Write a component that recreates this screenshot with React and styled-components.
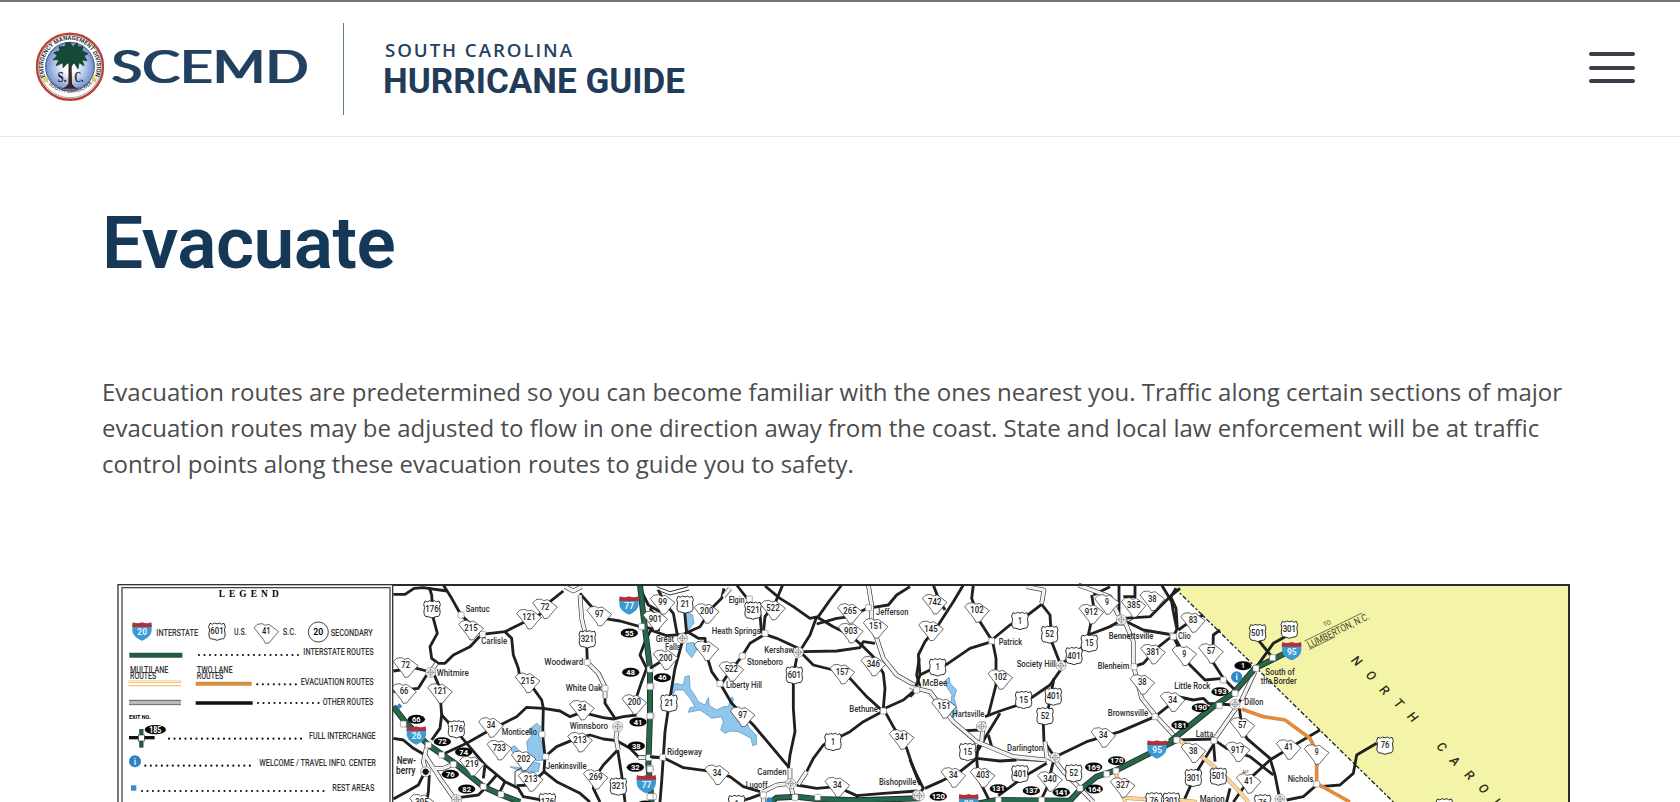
import React from 'react';
import styled, { createGlobalStyle } from 'styled-components';

const GlobalStyle = createGlobalStyle`
  * { box-sizing: border-box; }
  html, body { margin: 0; background: #fff; }
  body { font-family: "Open Sans", "Noto Sans", sans-serif; }
`;
const Page = styled.div`
  width: 100%;
  height: 802px;
  overflow: hidden;
  border-top: 2px solid #6b7680;
  background: #fff;
`;
const Header = styled.header`
  height: 135px;
  display: flex;
  align-items: center;
  justify-content: space-between;
  border-bottom: 1px solid #e7e7e9;
  padding: 0 45px 0 34px;
`;
const Brand = styled.div`
  display: flex;
  align-items: center;
`;
const LogoArt = styled.svg`
  display: block;
  width: 276px;
  height: 76px;
`;
const Divider = styled.div`
  width: 1px;
  height: 92px;
  margin-left: 33px;
  background: #55806b;
`;
const GuideName = styled.svg`
  display: block;
  width: 310px;
  height: 64px;
  margin-left: 36px;
`;
const MenuButton = styled.button`
  width: 46px;
  height: 31px;
  margin-bottom: 3px;
  padding: 0;
  border: 0;
  background: none;
  display: flex;
  flex-direction: column;
  justify-content: space-between;
`;
const MenuBar = styled.span`
  display: block;
  width: 46px;
  height: 4px;
  border-radius: 2px;
  background: #3c3c4a;
`;
const Main = styled.main`
  padding: 61px 110px 0 102px;
`;
const Title = styled.h1`
  margin: 0;
  font: 600 73px/90px Roboto, sans-serif;
  letter-spacing: -0.5px;
  color: #153857;
`;
const Copy = styled.p`
  margin: 86px 0 0;
  font-size: 24px;
  line-height: 36px;
  color: #4c4c4c;
  white-space: nowrap;
`;
const Line = styled.span`
  display: block;
`;
const MapArt = styled.svg`
  display: block;
  width: 1470px;
  height: 227px;
  margin: 93px 0 0 8px;
`;

function Seal() {
  return (
    <g transform="translate(0 -2.3)">
      <defs>
        <radialGradient id="sky">
          <stop offset="0.25" stopColor="#fff" />
          <stop offset="1" stopColor="#6f8fd0" />
        </radialGradient>
        <path id="sealTop" d="M12.2 50 A26.7 26.7 0 1 1 59.8 50" />
        <path id="sealBottom" d="M8.5 47 A30.5 30.5 0 0 0 63.5 47" />
      </defs>
      <circle cx="36" cy="38" r="33" fill="#fff" stroke="#bd4038" strokeWidth="2.4" />
      <circle cx="36" cy="38" r="31" fill="none" stroke="#555" strokeWidth=".5" />
      <circle cx="36" cy="38" r="24.4" fill="url(#sky)" stroke="#405584" strokeWidth="1" />
      <text fontFamily="Roboto" fontSize="5.8" fontWeight="700" fill="#333">
        <textPath href="#sealTop" startOffset="2" textLength="104" lengthAdjust="spacingAndGlyphs">EMERGENCY MANAGEMENT DIVISION</textPath>
      </text>
      <text fontFamily="Roboto" fontSize="5.8" fontWeight="500" fill="#555">
        <textPath href="#sealBottom" startOffset="10" textLength="49">SOUTH CAROLINA</textPath>
      </text>
      <path d="M34.6 29 L34.4 55 Q32 59 27 60 H45 Q40 59 38 55 L37.5 29Z" fill="#38261f" />
      <path d="M36 14 L39 18 L43 14 L44 18 L49 18 L48 22 L54 25 L50 27 L53 32 L48 31 L50 37 L45 34 L44 40 L40 34 L37 38 L34 34 L29 39 L29 34 L22 37 L25 31 L19 31 L23 27 L20 24 L26 22 L25 18 L31 18 L32 14Z" fill="#174a36" stroke="#123b2c" strokeWidth=".8" strokeLinejoin="round" />
      <g fontFamily="Liberation Serif" fontWeight="700" fontSize="14" fill="#222">
        <text x="23.5" y="53" textLength="9" lengthAdjust="spacingAndGlyphs">S.</text>
        <text x="40.5" y="53" textLength="9" lengthAdjust="spacingAndGlyphs">C.</text>
      </g>
      <path d="M12 47.5l1 2.3h2.4l-1.9 1.5.7 2.4-2.2-1.4-2.2 1.4.7-2.4-1.9-1.5H11zM60 47.5l1 2.3h2.4l-1.9 1.5.7 2.4-2.2-1.4-2.2 1.4.7-2.4-1.9-1.5H59z" fill="#e6d53c" stroke="#9a9036" strokeWidth=".3" />
    </g>
  );
}

/* Map drawing. Each sheet carries its own local coordinates, offset by x. */
const sheets = [
  {
    x: 840,
    water: [
      'M440 445L452 455L445 480L462 520L462 555L440 557L415 540L410 500L425 482L412 468Z',
      'M360 520L375 512L390 530L370 535ZM360 575L400 580L425 560L450 565L445 590L405 592L370 580Z',
    ],
    black: [
      '10,58 45,58 72,40 100,38 170,48', '160,30 185,70 213,120 245,150 275,178',
      '275,178 345,170 390,148 450,118 480,80 520,48',
      '275,178 240,215 190,240 165,265 145,265 125,250 120,215 142,175 130,130 125,60 118,38',
      '345,170 365,190 370,240 385,280 390,310 430,340 455,375 460,400 458,480 465,545 462,590 500,620 570,655 600,681',
      '462,590 420,630 380,632', '10,288 30,285 60,275 110,288', '110,300 85,340 40,345 10,350',
      '133,300 150,340 152,380 155,420 200,470 230,505 285,570 345,620 385,640 400,665 470,678',
      '155,420 150,460 125,495', '10,490 40,495 70,520 105,540',
      '165,535 230,505 300,465 350,440 380,425 410,397 460,400 510,408 540,425 575,412 640,428 670,432 700,425 740,420',
      '735,380 755,320 770,280 750,240 765,200 785,160',
      '465,545 500,515 560,490 600,480 640,492 680,497 720,520 745,545 810,548',
      '683,525 640,570 620,600 610,640 630,681', '683,525 695,600 705,681',
      '570,55 600,90 640,130 690,138 750,155 810,165', '590,210 592,260', '645,360 645,385 675,430',
      '10,672 50,650 85,630 100,600', '118,600 115,650 110,681', '205,668 265,660 285,640 320,600',
      '285,570 280,610', '345,620 330,650', '755,50 775,90 810,110',
    ],
    thin: ['375,590 375,632', '375,590 400,575'],
    multi: [
      '120,292 140,265', '570,60 575,130 588,185', '592,262 625,295 645,335 645,370', '110,515 100,560 110,590',
      '105,540 150,610 200,681', '683,455 678,490 685,525', '745,548 775,548', '525,35 550,48 575,35',
      '130,580 160,580 185,570',
    ],
    green: ['10,395 45,440 115,510 195,565 280,635 335,660 390,681', '750,30 760,120 780,280 780,420 775,570 785,681'],
    nodes: [[213, 120], [278, 178], [592, 262], [645, 340], [456, 478], [467, 545], [40, 447], [115, 510], [155, 540], [190, 568], [280, 635], [333, 658], [755, 155], [780, 283], [783, 333], [783, 422], [777, 548], [780, 580], [790, 665]],
    hubs: [[122, 292], [683, 455], [107, 590], [200, 674]],
    shields: [
      ['us', '176', 126, 102], ['sc', '215', 243, 160], ['sc', '121', 417, 127], ['sc', '72', 465, 96], ['sc', '97', 628, 118],
      ['i', '77', 717, 90], ['us', '321', 592, 192], ['e', '55', 718, 174], ['e', '48', 722, 292], ['sc', '72', 47, 272],
      ['sc', '66', 42, 350], ['sc', '121', 150, 350], ['sc', '215', 413, 318], ['sc', '34', 576, 400], ['sc', '200', 733, 383],
      ['us', '176', 199, 462], ['sc', '34', 303, 452], ['e', '66', 79, 433], ['i', '26', 79, 480], ['e', '72', 157, 500],
      ['e', '74', 221, 531], ['sc', '733', 328, 520], ['sc', '202', 401, 552], ['sc', '213', 570, 496], ['sc', '219', 246, 568],
      ['e', '76', 181, 598], ['e', '82', 230, 642], ['sc', '213', 422, 614], ['sc', '269', 617, 608], ['us', '321', 685, 634],
      ['e', '41', 744, 441], ['e', '38', 739, 513], ['e', '32', 736, 577], ['i', '77', 769, 626], ['us', '176', 472, 680], ['sc', '395', 96, 682],
      ['e', '', 766, 690],
    ],
    names: [
      ['Santuc', 227, 112, 72], ['Carlisle', 274, 208, 77], ['Whitmire', 140, 304, 96], ['Woodward', 463, 270, 117],
      ['White Oak', 527, 349, 110], ['Winnsboro', 539, 463, 115], ['Monticello', 335, 481, 106], ['Jenkinsville', 468, 582, 122],
      ['New-', 20, 568, 58, 1], ['berry', 18, 597, 58, 1],
    ],
  },
  {
    x: 1620,
    water: [
      'M105 108L128 120L132 145L110 170L104 135Z', 'M110 205L132 202L140 225L125 248L108 228Z',
      'M63 338L75 325L100 330L105 305L118 302L120 340L135 362L145 380L165 390L175 367L178 392L200 405L220 395L235 395L245 365L250 370L247 395L262 410L262 440L292 445L298 460L318 480L320 508L308 512L303 490L285 480L265 470L240 468L225 475L212 465L220 442L215 425L185 430L172 420L150 405L115 412L120 398L135 395L120 370L100 345L75 345L70 360Z',
    ],
    black: [
      '0,165 50,182 100,178 150,155 185,100 215,70 222,40', '25,45 45,85 70,115 82,180', '103,100 110,175',
      '97,200 75,280 58,380 45,470 40,545 35,620 30,681', '0,280 40,255',
      '115,172 145,190 165,190 170,240 185,290 210,325 245,385 310,450 415,575',
      '260,30 295,75 330,120 335,175', '398,30 375,85 345,125 340,175', '345,33 390,70 430,95 480,130 505,125 540,75 575,30',
      '345,178 380,190 445,220', '345,178 300,205 275,245 240,290 215,325', '455,220 480,180 500,125',
      '500,125 550,155 600,180 640,215 670,245 700,295 705,340 700,400', '500,147 560,130 600,125 655,98',
      '460,230 560,228 630,218 640,200 675,205', '455,235 490,270 550,285 600,310 650,365 695,405',
      '440,250 430,300 430,400 435,470 420,540 415,580', '780,35 740,60 715,90 665,98', '705,400 760,375 790,350',
      '810,335 800,300 808,250', '705,410 730,455 770,520 790,580 810,630',
      '700,408 640,440 600,470 550,495 520,510 490,550 470,590', '0,545 40,548 100,578 190,590 240,605 280,635 330,650',
      '440,630 500,640 560,635 620,662 700,655 800,648', '260,681 300,670 340,655', '0,100 20,130', '622,662 620,681',
    ],
    thin: ['20,35 60,50 115,35', '20,45 60,60 118,45'],
    multi: ['655,30 665,90 665,130 680,190 700,250 740,300 810,340', '470,590 445,628', '420,580 420,620 430,665', '340,650 380,630 420,625', '220,65 240,40', '340,650 340,681'],
    green: ['352,690 380,668 440,665 500,672 620,676 810,670'],
    nodes: [[345, 175], [277, 243], [210, 326], [38, 547], [700, 408], [655, 98], [340, 660], [435, 667], [503, 667], [298, 72], [0, 335], [0, 423], [0, 583], [0, 665]],
    hubs: [[97, 190], [445, 232], [422, 626], [802, 660]],
    shields: [
      ['sc', '99', 38, 83], ['us', '21', 105, 88], ['sc', '200', 170, 110], ['us', '521', 309, 106], ['sc', '522', 369, 100],
      ['sc', '901', 16, 132], ['sc', '265', 600, 110], ['sc', '903', 602, 169], ['sc', '151', 677, 155], ['sc', '97', 169, 222],
      ['sc', '522', 244, 284], ['sc', '200', 47, 249], ['us', '601', 433, 300], ['sc', '157', 577, 292], ['sc', '346', 670, 268],
      ['e', '46', 37, 308], ['us', '21', 57, 384], ['sc', '97', 278, 420], ['us', '1', 549, 500], ['sc', '341', 755, 488],
      ['sc', '34', 201, 594], ['sc', '34', 562, 631], ['us', '1', 260, 686], ['dot', '', 358, 676],
    ],
    names: [
      ['Elgin', 236, 84, 48], ['Heath Springs', 185, 177, 147], ['Kershaw', 343, 234, 89], ['Stoneboro', 291, 271, 108],
      ['Liberty Hill', 228, 340, 108], ['Great', 17, 201, 55], ['Falls', 45, 226, 47], ['Bethune', 598, 410, 86],
      ['Jefferson', 678, 121, 97], ['Ridgeway', 51, 540, 105], ['Camden', 322, 599, 88], ['Lugoff', 287, 640, 66], ['Bishopville', 687, 631, 112],
    ],
  },
  {
    x: 2400,
    water: ['M107 315L118 307L120 325L140 345L132 370L138 390L142 415L128 430L122 390L126 360L110 335Z'],
    black: [
      '70,30 85,70 105,105', '160,30 130,80 85,150 45,200 25,240 30,300 10,355 0,365', '30,300 60,285 110,268 180,220 245,200',
      '190,30 185,70 210,140 245,195', '245,195 300,150 340,130 395,88', '395,88 420,120 425,200 450,265',
      '248,200 258,250 258,330 235,420', '455,280 420,330 340,385 270,408 225,425', '432,310 415,400 400,450 402,500 430,540',
      '270,415 230,480 205,525', '235,480 245,515', '205,510 200,550 205,610 240,681', '165,467 210,465',
      '45,640 90,620 150,590 200,550 270,558 320,555', '430,548 530,500 630,470 735,425 785,385', '410,565 350,600 265,662',
      '430,560 410,640 390,681', '545,60 552,100 535,180 600,155 625,140', '455,265 490,245 540,190', '600,35 550,60',
      '675,30 675,65 640,65', '627,30 627,130', '640,130 720,125 780,65 810,40', '755,30 785,80 790,110 800,160',
      '650,140 700,165 790,180', '790,180 740,220 700,265 670,275', '790,180 810,215', '0,555 20,600 40,640 25,660',
    ],
    thin: ['320,555 410,560', '600,150 640,150 680,125'],
    multi: ['350,35 402,45 395,85', '0,335 60,350 90,390 130,440 200,500 310,545 410,555', '505,30 560,50 600,65 625,120', '640,130 670,200 670,270 695,370 735,420 800,490', '405,500 410,545 430,555', '220,440 215,500', '430,550 460,590 510,640 550,681'],
    green: ['180,690 260,675 480,677 510,645 560,605 620,585 700,545 810,490'],
    peach: ['615,590 635,640 645,681', '640,668 740,675'],
    nodes: [[245, 198], [20, 345], [672, 275], [735, 425], [590, 597], [618, 588], [510, 640], [797, 490], [265, 675], [395, 675], [788, 182]],
    hubs: [[453, 272], [634, 134], [214, 455], [435, 548], [28, 662]],
    shields: [
      ['sc', '742', 74, 82], ['sc', '145', 63, 162], ['sc', '102', 201, 107], ['us', '1', 330, 137], ['us', '52', 419, 178],
      ['sc', '9', 591, 83], ['sc', '912', 544, 112], ['sc', '385', 671, 92], ['sc', '38', 727, 72], ['us', '15', 538, 204],
      ['us', '401', 492, 242], ['sc', '381', 729, 232], ['us', '1', 83, 276], ['sc', '102', 271, 308], ['us', '15', 341, 374],
      ['us', '401', 430, 364], ['us', '52', 405, 423], ['sc', '38', 697, 323], ['sc', '34', 788, 375], ['sc', '151', 102, 395],
      ['sc', '34', 580, 482], ['i', '95', 741, 522], ['us', '15', 173, 530], ['sc', '34', 130, 602], ['sc', '403', 218, 602],
      ['us', '401', 330, 596], ['sc', '340', 420, 614], ['us', '52', 491, 594], ['e', '169', 551, 576], ['e', '170', 620, 557],
      ['e', '164', 553, 642], ['sc', '327', 638, 632], ['e', '131', 265, 641], ['e', '137', 364, 647], ['e', '141', 454, 652],
      ['e', '120', 85, 664], ['i', '20', 176, 683], ['us', '76', 732, 678], ['us', '301', 784, 678],
    ],
    names: [
      ['Patrick', 266, 210, 70], ['Society Hill', 320, 275, 117], ['McBee', 37, 332, 75], ['Hartsville', 127, 425, 96],
      ['Bennettsville', 596, 193, 134, 1], ['Blenheim', 563, 282, 95], ['Brownsville', 593, 424, 122], ['Darlington', 291, 528, 108],
    ],
  },
  {
    x: 3180,
    water: [],
    black: [
      '0,60 18,100 22,160 10,185', '0,70 18,40', '10,185 45,255 105,315 160,310 200,350', '25,165 60,140 100,120',
      '150,165 130,180 128,260 160,310', '265,195 305,245', '355,180 310,205 260,275', '255,280 235,340 205,385',
      '0,360 70,375 100,370 115,385 190,390', '20,495 130,492', '208,400 215,450 230,490 300,550 315,600 328,665',
      '140,500 170,520 240,545 310,600', '450,465 390,500 300,555 240,610 190,681', '130,500 135,560', '130,510 80,590 40,681',
      '440,630 400,665 350,675', '450,635 510,630 550,595 560,540 620,505', '180,640 170,681',
    ],
    thin: [],
    multi: ['198,400 135,490', '255,290 215,375'],
    green: ['0,500 130,395 190,355 255,280 345,235'],
    orange: ['215,402 280,425 345,435 420,490 440,530 440,625 540,681'],
    peach: ['20,490 90,540 150,590 200,640 235,681', '0,672 80,681'],
    nodes: [[10, 185], [160, 315], [258, 280], [308, 248], [148, 392], [195, 355], [20, 495], [132, 497], [440, 627]],
    hubs: [[195, 388], [330, 672]],
    shields: [
      ['sc', '83', 69, 137], ['sc', '9', 43, 237], ['sc', '57', 123, 230], ['us', '501', 263, 173], ['us', '301', 358, 163],
      ['i', '95', 365, 227], ['e', '1', 219, 272], ['dot', 'i', 200, 306], ['e', '193', 150, 350], ['e', '190', 91, 398],
      ['e', '181', 30, 450], ['sc', '57', 217, 452], ['sc', '41', 356, 518], ['sc', '9', 440, 533], ['us', '76', 645, 511],
      ['sc', '38', 70, 528], ['sc', '917', 203, 525], ['us', '301', 70, 608], ['us', '501', 145, 604], ['sc', '41', 236, 620],
      ['us', '76', 278, 684], ['us', '', 823, 696],
    ],
    names: [
      ['Clio', 24, 193, 38], ['Little Rock', 13, 342, 108], ['South of', 286, 301, 88], ['the Border', 272, 326, 108],
      ['Dillon', 223, 391, 57], ['Latta', 77, 485, 53], ['Nichols', 353, 622, 77], ['Marion', 89, 680, 75],
    ],
  },
];

const digitWidth = { 1: 12, 2: 26, 3: 40 };

function Shield({ kind, label, x, y }) {
  const w = digitWidth[label.length] || 0;
  const digits = (size, fill = '#2b2b2b', dy = 9, weight = 500) => label && (
    <text x={-w / 2} y={dy} textLength={w} lengthAdjust="spacingAndGlyphs" fontSize={size} fontWeight={weight} fill={fill}>{label}</text>
  );
  return (
    <g transform={`translate(${x} ${y})`}>
      {kind === 'sc' && (
        <>
          <path d="M-37-12L-27-22L-12-24L-4-19L8-22L37 0L26 12L8 34L-3 35L-8 25Z" fill="#fff" stroke="#333" strokeWidth="2.2" strokeLinejoin="round" />
          {digits(28, '#222', 8)}
        </>
      )}
      {kind === 'us' && (
        <>
          <path d="M-21-24Q-12-18-8-25Q0-20 8-25Q12-18 21-24L25-14Q20-4 24 5Q26 15 20 22Q8 23 0 27Q-8 23-20 22Q-26 15-24 5Q-20-4-25-14Z" fill="#fff" stroke="#222" strokeWidth="2.8" />
          {digits(29, '#222')}
        </>
      )}
      {kind === 'i' && (
        <>
          <path d="M-28-15H28Q35 15 0 29Q-35 15-28-15Z" fill="#3c9ad2" />
          <path d="M-28-26Q-14-20 0-26Q14-20 28-26L30-12H-30Z" fill="#b52f38" />
          <text x="-14" y="12" textLength="29" lengthAdjust="spacingAndGlyphs" fontSize="29" fontWeight="700" fill="#e4f5ff">{label}</text>
        </>
      )}
      {kind === 'e' && (
        <>
          <ellipse rx="26" ry="13.5" fill="#080808" />
          {digits(22, '#fff', 8, 700)}
        </>
      )}
      {kind === 'dot' && (
        <>
          <circle r={label ? 17 : 9} fill="#2f87c5" />
          {label && <text y="9" textAnchor="middle" fontSize="27" fontWeight="700" fill="#d9efff">i</text>}
        </>
      )}
    </g>
  );
}

function Roads({ lines = [], color, width, dash }) {
  return lines.map((p) => (
    <polyline key={p} points={p} fill="none" stroke={color} strokeWidth={width} strokeDasharray={dash} strokeLinejoin="round" />
  ));
}

function Legend() {
  const entries = [
    ['INTERSTATE ROUTES', 580, 241, 211, 267, 565, 240], ['EVACUATION ROUTES', 572, 331, 219, 442, 560, 328],
    ['OTHER ROUTES', 638, 389, 152, 444, 623, 384], ['FULL INTERCHANGE', 597, 493, 200, 177, 575, 491],
    ['WELCOME / TRAVEL INFO. CENTER', 448, 573, 350, 106, 428, 572], ['REST AREAS', 667, 647, 126, 96, 652, 648],
  ];
  return (
    <g>
      <rect x="24" y="29" width="824" height="720" fill="#fff" stroke="#333" strokeWidth="4" />
      <rect x="36" y="38" width="804" height="700" fill="none" stroke="#333" strokeWidth="3.5" />
      <text x="326" y="66" fontFamily="Liberation Serif" fontSize="28" fontWeight="700" textLength="180">LEGEND</text>
      <Shield kind="i" label="20" x={96} y={168} />
      <Shield kind="us" label="601" x={321} y={169} />
      <Shield kind="sc" label="41" x={469} y={170} />
      <circle cx="625" cy="171" r="30" fill="#fff" stroke="#222" strokeWidth="2.5" />
      <text x="610" y="181" fontSize="28" fontWeight="600" textLength="30" lengthAdjust="spacingAndGlyphs">20</text>
      {[['INTERSTATE', 139, 182, 125], ['U.S.', 372, 179, 38], ['S.C.', 518, 180, 40], ['SECONDARY', 662, 182, 126],
        ['MULTILANE', 60, 295, 115], ['ROUTES', 60, 313, 79], ['TWO LANE', 260, 295, 108], ['ROUTES', 260, 313, 80]].map(([t, x, y, w], i) => (
          <text key={i} x={x} y={y} textLength={w} lengthAdjust="spacingAndGlyphs" fontSize="26" fontWeight="500" fill="#333">{t}</text>
      ))}
      {entries.map(([t, x, y, w, a, b, dy]) => (
        <g key={t}>
          <text x={x} y={y} textLength={w} lengthAdjust="spacingAndGlyphs" fontSize="26" fontWeight="500" fill="#333">{t}</text>
          <path d={`M${a} ${dy}H${b + 3}`} stroke="#111" strokeWidth="6.5" strokeLinecap="round" strokeDasharray="0 16.5" />
        </g>
      ))}
      <path d="M58 241H217" stroke="#225b42" strokeWidth="15" />
      <path d="M55 322H214M55 332H214" stroke="#f3c27f" strokeWidth="4" />
      <path d="M55 317H214" stroke="#f9dfb0" strokeWidth="4" />
      <path d="M257 326H425" stroke="#d78e43" strokeWidth="12" />
      <path d="M57 382H213" stroke="#bbb" strokeWidth="12" />
      <path d="M57 376H213M57 389H213" stroke="#444" strokeWidth="2.5" />
      <path d="M257 384H428" stroke="#111" strokeWidth="10" />
      <text x="57" y="431" fontSize="16" fontWeight="700" textLength="65" lengthAdjust="spacingAndGlyphs">EXIT NO.</text>
      <path d="M57 488H134" stroke="#111" strokeWidth="10" />
      <path d="M94 462V518" stroke="#225b42" strokeWidth="13" />
      <rect x="85" y="480" width="18" height="18" fill="#fff" stroke="#333" strokeWidth="2" />
      <ellipse cx="136" cy="464" rx="32" ry="14" fill="#090909" />
      <text x="118" y="473" fontSize="25" fontWeight="700" fill="#fff" textLength="36" lengthAdjust="spacingAndGlyphs">185</text>
      <circle cx="75" cy="559" r="18" fill="#2f82c3" />
      <text x="75" y="569" textAnchor="middle" fontSize="27" fontWeight="700" fill="#d9efff">i</text>
      <rect x="63" y="631" width="16" height="16" fill="#3f8bc0" />
    </g>
  );
}

const stateLetters = [
  ['N', 3740, 258], ['O', 3783, 302], ['R', 3824, 345], ['T', 3866, 385], ['H', 3908, 426],
  ['C', 3995, 516], ['A', 4035, 558], ['R', 4079, 600], ['O', 4121, 641], ['L', 4162, 683],
];

function EvacuationMap() {
  return (
    <MapArt viewBox="0 0 4410 681" fontFamily="Roboto, sans-serif">
      <rect x="848" y="30" width="3529" height="651" fill="#fff" />
      <path d="M3186 30H4377V681H3850Z" fill="#f4f4a9" />
      {sheets.map((s) => (
        <g key={s.x} transform={`translate(${s.x})`}>
          {s.water.map((d) => <path key={d} d={d} fill="#91c7ed" stroke="#468dc0" strokeWidth="2" />)}
        </g>
      ))}
      <path d="M3195 40L3850 681" stroke="#202020" strokeWidth="4" strokeDasharray="14 6 7 6" />
      {sheets.map((s) => (
        <g key={s.x} transform={`translate(${s.x})`}>
          <Roads lines={s.black} color="#202020" width="8.5" />
          <Roads lines={s.thin} color="#333" width="3" />
          <Roads lines={s.multi} color="#444" width="14" />
          <Roads lines={s.multi} color="#fff" width="9.5" />
          <Roads lines={s.multi} color="#bbb" width="1.2" />
          <Roads lines={s.green} color="#262c29" width="18" />
          <Roads lines={s.green} color="#25684c" width="13" />
          <Roads lines={s.peach} color="#b89057" width="12" />
          <Roads lines={s.peach} color="#f9d5a0" width="9" />
          <Roads lines={s.orange} color="#e28a3d" width="11" />
          {s.nodes.map(([x, y]) => <rect key={`${x},${y}`} x={x - 9} y={y - 9} width="18" height="18" rx="3" fill="#fff" stroke="#777" strokeWidth="1.8" />)}
          {s.hubs.map(([x, y]) => (
            <g key={`${x},${y}`} fill="#fff" stroke="#777" strokeWidth="2">
              <circle cx={x} cy={y} r="15" />
              <circle cx={x} cy={y} r="8" />
              <path d={`M${x - 13} ${y}H${x + 13}M${x} ${y - 13}V${y + 13}`} />
            </g>
          ))}
        </g>
      ))}
      {sheets.map((s) => (
        <g key={s.x} transform={`translate(${s.x})`}>
          {s.shields.map(([k, t, x, y], i) => <Shield key={i} kind={k} label={t} x={x} y={y} />)}
          {s.names.map(([t, x, y, w, bold]) => (
            <text key={t} x={x} y={y} fontSize={bold && t.length < 6 ? 31 : 27} fontWeight={bold ? 600 : 500} textLength={w} lengthAdjust="spacingAndGlyphs" fill="#2d2d2d">{t}</text>
          ))}
        </g>
      ))}
      <circle cx="947" cy="590" r="9" fill="#111" />
      <path d="M868 385l9 9-9 9-9-9z" fill="#3388c6" />
      <text x="3397" y="594" fontSize="12">ALT</text>
      <g transform="translate(3598 220) rotate(-26)" fill="#444726">
        <text fontSize="30" textLength="203" lengthAdjust="spacingAndGlyphs">LUMBERTON, N.C.</text>
        <path d="M-4-26H188M-2 3H85" stroke="#444726" strokeWidth="2" />
        <text x="68" y="-38" fontSize="19">TO</text>
      </g>
      {stateLetters.map(([t, x, y]) => (
        <text key={x} transform={`translate(${x} ${y}) rotate(44)`} y="13" textAnchor="middle" fontSize="38" fontStyle="italic" fontWeight="500" fill="#2d2e1a">{t}</text>
      ))}
      <path d="M846 30H4377V690" fill="none" stroke="#292c25" strokeWidth="6" />
      <Legend />
    </MapArt>
  );
}

export default function App() {
  return (
    <Page>
      <GlobalStyle />
      <Header>
        <Brand>
          <LogoArt viewBox="0 0 276 76">
            <defs>
              <filter id="wideStems" x="-5%" y="-5%" width="110%" height="110%">
                <feMorphology operator="dilate" radius="1 0" />
              </filter>
            </defs>
            <Seal />
            <text x="77.5" y="52" fontFamily="Lato, sans-serif" fontSize="46" fontWeight="400" fill="#23415f" stroke="#23415f" strokeWidth=".2" textLength="197" lengthAdjust="spacingAndGlyphs" filter="url(#wideStems)">SCEMD</text>
          </LogoArt>
          <Divider />
          <GuideName viewBox="0 0 310 64">
            <text x="5" y="20" fontFamily="Open Sans, sans-serif" fontSize="18.7" fontWeight="600" textLength="187" fill="#24415f">SOUTH CAROLINA</text>
            <text x="3" y="56" fontFamily="Roboto, sans-serif" fontSize="35.6" fontWeight="700" textLength="302" lengthAdjust="spacingAndGlyphs" fill="#213b59">HURRICANE GUIDE</text>
          </GuideName>
        </Brand>
        <MenuButton aria-label="Menu"><MenuBar /><MenuBar /><MenuBar /></MenuButton>
      </Header>
      <Main>
        <Title>Evacuate</Title>
        <Copy>
          <Line>Evacuation routes are predetermined so you can become familiar with the ones nearest you. Traffic along certain sections of major</Line>
          <Line>evacuation routes may be adjusted to flow in one direction away from the coast. State and local law enforcement will be at traffic</Line>
          <Line>control points along these evacuation routes to guide you to safety.</Line>
        </Copy>
        <EvacuationMap />
      </Main>
    </Page>
  );
}
